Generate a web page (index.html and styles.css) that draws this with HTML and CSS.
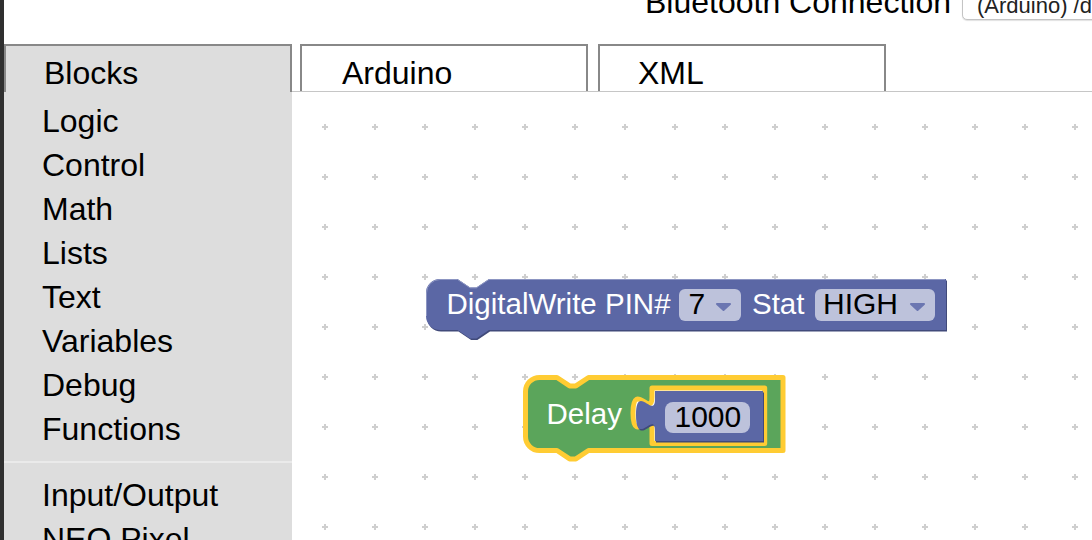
FILE: index.html
```html
<!DOCTYPE html>
<html lang="en">
<head>
<meta charset="utf-8">
<title>Blocks</title>
<link rel="stylesheet" href="styles.css">
</head>
<body>
<div class="app">
  <div class="strip"></div>
  <div class="main">
    <header class="topbar">
      <span class="bt-label">Bluetooth Connection</span>
      <span class="bt-select">(Arduino) /dev/cu.HC-06-DevB</span>
    </header>
    <nav class="tabs">
      <div class="tab tab-active tab-blocks">Blocks</div>
      <div class="tab tab-arduino">Arduino</div>
      <div class="tab tab-xml">XML</div>
    </nav>
    <div class="content">
      <aside class="toolbox">
        <ul class="cats">
          <li>Logic</li>
          <li>Control</li>
          <li>Math</li>
          <li>Lists</li>
          <li>Text</li>
          <li>Variables</li>
          <li>Debug</li>
          <li>Functions</li>
        </ul>
        <div class="sep"></div>
        <ul class="cats">
          <li>Input/Output</li>
          <li>NEO Pixel</li>
          <li>Servo</li>
        </ul>
      </aside>
      <div class="workspace">
        <svg class="ws-svg" width="800" height="448" viewBox="0 0 800 448">
          <defs>
            <pattern id="grid" x="8" y="10" width="50" height="50" patternUnits="userSpaceOnUse">
              <rect x="22" y="24" width="6" height="2" fill="#cfcfcf"/>
              <rect x="24" y="22" width="2" height="6" fill="#cfcfcf"/>
            </pattern>
          </defs>
          <rect x="0" y="0" width="800" height="448" fill="url(#grid)"/>

          <!-- DigitalWrite block -->
          <g class="blk">
            <path transform="translate(1,1.5)" fill="#414a7a" d="M134,201 A14,14 0 0 1 148,187 H165.5 l12.6,8.4 h6.3 l12.6,-8.4 H654 V238 H197 l-12.6,8.4 h-6.3 l-12.6,-8.4 H148 A14,14 0 0 1 134,224 Z"/>
            <path fill="#5b67a5" d="M134,201 A14,14 0 0 1 148,187 H165.5 l12.6,8.4 h6.3 l12.6,-8.4 H654 V238 H197 l-12.6,8.4 h-6.3 l-12.6,-8.4 H148 A14,14 0 0 1 134,224 Z"/>
            <path fill="none" stroke="#8c95c2" stroke-width="1" d="M134.5,224 V201 A13.5,13.5 0 0 1 148,187.5 H165.5 l12.6,8.4 h6.3 l12.6,-8.4 H653"/>
            <text class="blk-text" x="154.5" y="222">DigitalWrite PIN#</text>
            <rect x="387" y="197" width="62" height="32" rx="6" fill="#bdc2db"/>
            <text class="fld-text" x="396.5" y="222">7</text>
            <path class="arrow" d="M425,212 H438 L431.5,218 Z"/>
            <text class="blk-text" x="460" y="222">Stat</text>
            <rect x="523" y="197" width="120" height="32" rx="6" fill="#bdc2db"/>
            <text class="fld-text" x="531" y="222">HIGH</text>
            <path class="arrow" d="M619,212 H632 L625.5,218 Z"/>
          </g>

          <!-- Delay block (selected) -->
          <g class="blk">
            <path fill="#5ba55b" fill-rule="evenodd" stroke="#ffcc33" stroke-width="5" stroke-linejoin="round"
              d="M233.5,299.5 A14,14 0 0 1 247.5,285.5 H265 l12.6,8.4 h6.3 l12.6,-8.4 H491 V358.5 H296.5 l-12.6,8.4 h-6.3 l-12.6,-8.4 H247.5 A14,14 0 0 1 233.5,344.5 Z
                 M360,296 V305 c0,21.3 -19,-17 -19,16 s19,-5.3 19,16 V351.5 H472.7 V296 Z"/>
            <text class="blk-text" x="254.5" y="331.5">Delay</text>
            <path transform="translate(1,1.5)" fill="#414a7a" d="M363,299 V307 c0,21.3 -19,-17 -19,16 s19,-5.3 19,16 V349 H471 V299 Z"/>
            <path fill="#5b67a5" d="M363,299 V307 c0,21.3 -19,-17 -19,16 s19,-5.3 19,16 V349 H471 V299 Z"/>
            <rect x="373" y="310" width="85" height="31" rx="8" fill="#bdc2db"/>
            <text class="fld-text" x="382.5" y="335">1000</text>
          </g>
        </svg>
      </div>
    </div>
  </div>
</div>
</body>
</html>
```

FILE: styles.css
```css
html, body {
  margin: 0;
  padding: 0;
  width: 1092px;
  height: 540px;
  overflow: hidden;
  background: #ffffff;
}

body {
  font-family: "Liberation Sans", Arial, sans-serif;
  color: #000;
}

.app {
  display: flex;
  width: 1092px;
  height: 540px;
  overflow: hidden;
}

.strip {
  flex: none;
  width: 4px;
  background: #2f2f2f;
}

.main {
  flex: 1;
  min-width: 0;
  display: flex;
  flex-direction: column;
}

/* header */
.topbar {
  flex: none;
  height: 44px;
  display: flex;
  align-items: flex-start;
  padding-left: 641px;
  white-space: nowrap;
}

.bt-label {
  flex: none;
  font-size: 32px;
  line-height: 44px;
  margin-top: -20px;
}

.bt-select {
  flex: none;
  box-sizing: border-box;
  height: 34px;
  margin-top: -14px;
  margin-left: 11px;
  padding: 9px 16px 0 14px;
  font-size: 22px;
  line-height: 20px;
  color: #222;
  background: #fff;
  border: 1px solid #c4c4c4;
  border-radius: 5px;
  box-shadow: 0 1px 1px rgba(0, 0, 0, 0.12);
}

/* tabs */
.tabs {
  flex: none;
  box-sizing: border-box;
  height: 48px;
  display: flex;
  align-items: flex-start;
  border-bottom: 1px solid #c6c6c6;
}

.tab {
  flex: none;
  box-sizing: border-box;
  width: 288px;
  height: 47px;
  border: 2px solid #888888;
  border-bottom: none;
  padding-top: 6px;
  padding-left: 38px;
  font-size: 32px;
  line-height: 42px;
  overflow: hidden;
  background: #ffffff;
}

.tab-active {
  height: 48px;
  background: #dddddd;
}

.tab-blocks {
  padding-left: 38px;
}

.tab-arduino {
  margin-left: 8px;
  padding-left: 40px;
}

.tab-xml {
  margin-left: 10px;
}

/* body */
.content {
  flex: 1;
  min-height: 0;
  display: flex;
}

.toolbox {
  flex: none;
  width: 288px;
  background: #dddddd;
  padding-top: 7px;
  overflow: hidden;
}

.cats {
  list-style: none;
  margin: 0;
  padding: 0 0 0 38px;
}

.cats li {
  font-size: 32px;
  line-height: 44px;
  white-space: nowrap;
}

.sep {
  height: 2px;
  margin: 10px 0 10px;
  background: #eaeaea;
}

.workspace {
  flex: 1;
  min-width: 0;
  background: #ffffff;
  overflow: hidden;
}

.ws-svg {
  display: block;
}

.blk-text {
  font-family: "Liberation Sans", Arial, sans-serif;
  font-size: 29.5px;
  fill: #ffffff;
}

.fld-text {
  font-family: "Liberation Sans", Arial, sans-serif;
  font-size: 30px;
  fill: #000000;
}

.arrow {
  fill: #6b76b1;
  stroke: #6b76b1;
  stroke-width: 2;
  stroke-linejoin: round;
}
```
